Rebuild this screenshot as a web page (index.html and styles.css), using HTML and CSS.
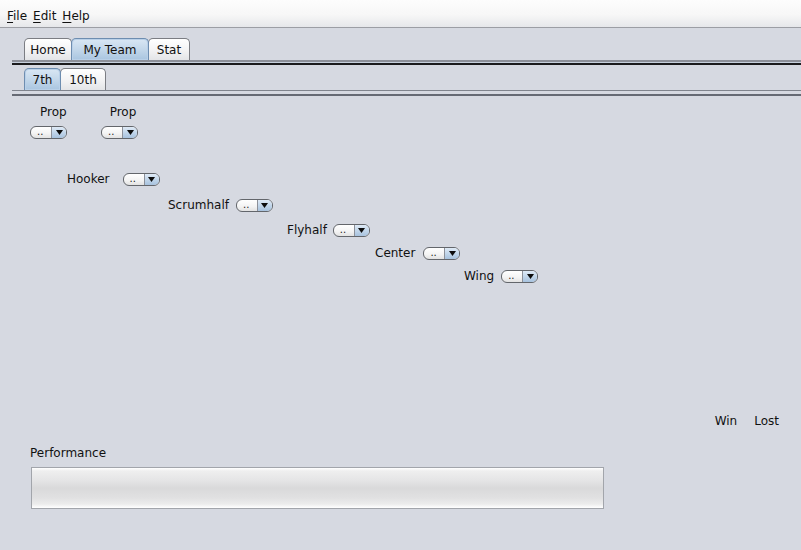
FILE: index.html
```html
<!DOCTYPE html>
<html lang="en">
<head>
<meta charset="utf-8">
<title>My Team</title>
<link rel="stylesheet" href="styles.css">
</head>
<body>
<div class="menubar">
  <span class="menu"><u>F</u>ile</span>
  <span class="menu"><u>E</u>dit</span>
  <span class="menu"><u>H</u>elp</span>
</div>

<div class="tabstrip outer">
  <div class="tab w-home">Home</div>
  <div class="tab sel w-team">My Team</div>
  <div class="tab w-stat">Stat</div>
</div>
<div class="rule rule-outer"></div>

<div class="tabstrip inner">
  <div class="tab sel w-7">7th</div>
  <div class="tab w-10">10th</div>
</div>
<div class="rule rule-inner"></div>

<main class="pitch">
  <div class="row props-labels">
    <span class="lbl">Prop</span>
    <span class="lbl">Prop</span>
  </div>
  <div class="row props-combos">
    <span class="combo"><span class="combo-val">..</span><span class="combo-btn"><svg width="7" height="5" viewBox="0 0 7 5"><path d="M0 0H7L3.5 5Z"/></svg></span></span>
    <span class="combo"><span class="combo-val">..</span><span class="combo-btn"><svg width="7" height="5" viewBox="0 0 7 5"><path d="M0 0H7L3.5 5Z"/></svg></span></span>
  </div>
  <div class="row pos hooker">
    <span class="lbl">Hooker</span>
    <span class="combo"><span class="combo-val">..</span><span class="combo-btn"><svg width="7" height="5" viewBox="0 0 7 5"><path d="M0 0H7L3.5 5Z"/></svg></span></span>
  </div>
  <div class="row pos scrumhalf">
    <span class="lbl">Scrumhalf</span>
    <span class="combo"><span class="combo-val">..</span><span class="combo-btn"><svg width="7" height="5" viewBox="0 0 7 5"><path d="M0 0H7L3.5 5Z"/></svg></span></span>
  </div>
  <div class="row pos flyhalf">
    <span class="lbl">Flyhalf</span>
    <span class="combo"><span class="combo-val">..</span><span class="combo-btn"><svg width="7" height="5" viewBox="0 0 7 5"><path d="M0 0H7L3.5 5Z"/></svg></span></span>
  </div>
  <div class="row pos center">
    <span class="lbl">Center</span>
    <span class="combo"><span class="combo-val">..</span><span class="combo-btn"><svg width="7" height="5" viewBox="0 0 7 5"><path d="M0 0H7L3.5 5Z"/></svg></span></span>
  </div>
  <div class="row pos wing">
    <span class="lbl">Wing</span>
    <span class="combo"><span class="combo-val">..</span><span class="combo-btn"><svg width="7" height="5" viewBox="0 0 7 5"><path d="M0 0H7L3.5 5Z"/></svg></span></span>
  </div>

  <div class="row record">
    <span class="lbl">Win</span>
    <span class="lbl">Lost</span>
  </div>

  <div class="row perf-label">
    <span class="lbl">Performance</span>
  </div>
  <div class="perf-bar"></div>
</main>
</body>
</html>
```

FILE: styles.css
```css
html, body {
  margin: 0;
  padding: 0;
}

body {
  width: 801px;
  height: 550px;
  overflow: hidden;
  background: #d6d9e1;
  font-family: "DejaVu Sans", "Liberation Sans", sans-serif;
  font-size: 12px;
  color: #111;
}

/* ---- menu bar ---- */
.menubar {
  box-sizing: border-box;
  height: 28px;
  padding: 8px 0 0 7px;
  display: flex;
  gap: 6px;
  line-height: 16px;
  background: linear-gradient(#fdfdfd 0%, #f7f7f7 55%, #e6e7ea 100%);
  border-bottom: 1px solid #9c9ea4;
}

.menu u {
  text-decoration: underline;
  text-underline-offset: 2px;
}

/* ---- tab strips ---- */
.tabstrip {
  display: flex;
  padding-left: 24px;
}

.tabstrip.outer {
  margin-top: 10px;
}

.tabstrip.inner {
  margin-top: 5px;
}

.tab {
  box-sizing: border-box;
  height: 22px;
  line-height: 22px;
  text-align: center;
  border: 1px solid #7b7d83;
  border-bottom: none;
  border-radius: 5px 5px 0 0;
  background: linear-gradient(#ffffff 0%, #f4f4f5 50%, #e3e4e7 100%);
  margin-right: -1px;
}

.tab.sel {
  background: linear-gradient(#d9e7f4 0%, #c3d7ea 50%, #a9c5e0 100%);
  border-color: #6d8db0;
  box-shadow: inset 0 0 0 1px #b9d0e8;
  position: relative;
  z-index: 1;
}

.w-home { width: 48px; }
.w-team { width: 78px; }
.w-stat { width: 42px; }
.w-7 { width: 37px; }
.w-10 { width: 46px; }

/* ---- pane borders under the tab strips ---- */
.rule {
  margin-left: 12px;
}

.rule-outer {
  height: 2px;
  background: #8d9099;
  border-bottom: 1px solid #c7d1de;
  box-shadow: 0 2px 0 #1b1b1d;
}

.rule-inner {
  height: 1px;
  background: #80848d;
  border-bottom: 3px solid #d6d9e1;
  box-shadow: 0 2px 0 #666a74;
}

/* ---- team sheet ---- */
.pitch {
  display: flex;
  flex-direction: column;
  padding-top: 4px;
}

.row {
  display: flex;
  align-items: center;
  height: 15px;
  line-height: 15px;
}

.props-labels {
  margin-top: 7px;
  padding-left: 40px;
  gap: 43px;
}

.props-combos {
  margin-top: 5px;
  padding-left: 30px;
  gap: 34px;
}

.pos { gap: 7px; }

.hooker    { margin-top: 32px; padding-left: 67px; gap: 13px; }
.scrumhalf { margin-top: 11px; padding-left: 168px; }
.flyhalf   { margin-top: 10px; padding-left: 287px; gap: 6px; }
.center    { margin-top: 8px;  padding-left: 375px; gap: 8px; }
.wing      { margin-top: 8px;  padding-left: 464px; }

.record {
  margin-top: 130px;
  justify-content: flex-end;
  padding-right: 22px;
  gap: 17px;
}

.perf-label {
  margin-top: 17px;
  padding-left: 30px;
}

.perf-bar {
  box-sizing: border-box;
  margin: 6px 0 0 31px;
  width: 573px;
  height: 42px;
  border: 1px solid #a2a5ab;
  background: linear-gradient(#ffffff 0px, #efefef 3px, #e5e5e6 12px,
              #d9d9da 20px, #e1e1e2 30px, #ececec 36px, #fbfbfb 39px, #ffffff 40px);
}

/* ---- combo box ---- */
.combo {
  box-sizing: border-box;
  display: inline-flex;
  width: 37px;
  height: 13px;
  border: 1px solid #63666b;
  border-radius: 6px;
  overflow: hidden;
  background: linear-gradient(#ffffff 0%, #f3f3f3 60%, #e2e2e2 100%);
}

.combo-val {
  flex: 1;
  font-size: 10px;
  line-height: 10px;
  padding-left: 6px;
  color: #222;
}

.combo-btn {
  width: 14px;
  display: flex;
  align-items: center;
  justify-content: center;
  border-left: 1px solid #8c9099;
  background: linear-gradient(#dfeaf6 0%, #c2d6ea 50%, #a7c2de 100%);
}

.combo-btn svg {
  display: block;
  fill: #0c0c0c;
}
```
